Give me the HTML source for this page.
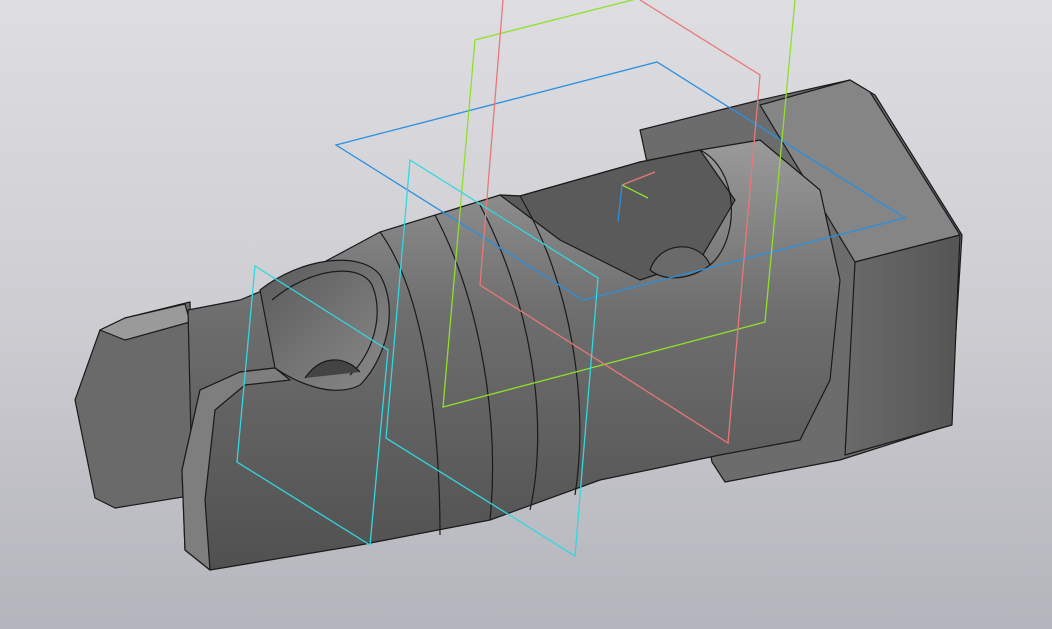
<!DOCTYPE html>
<html><head><meta charset="utf-8"><style>
html,body{margin:0;padding:0;width:1052px;height:629px;overflow:hidden}
body{background:linear-gradient(180deg,#dedee2 0%,#cdcdd2 50%,#b4b4bc 100%)}
svg{position:absolute;left:0;top:0}
</style></head><body>
<svg width="1052" height="629" viewBox="0 0 1052 629">
<defs>
<linearGradient id="b" x1="0" y1="0" x2="0" y2="1">
<stop offset="0" stop-color="#9a9a9a"/><stop offset="0.4" stop-color="#6e6e6e"/><stop offset="1" stop-color="#505050"/></linearGradient>
<linearGradient id="h" x1="0" y1="0" x2="1" y2="0">
<stop offset="0" stop-color="#6a6a6a"/><stop offset="1" stop-color="#555"/></linearGradient>
<linearGradient id="o" x1="0" y1="0" x2="1" y2="1">
<stop offset="0" stop-color="#5a5a5a"/><stop offset="1" stop-color="#8a8a8a"/></linearGradient>
</defs>
<g stroke="#1a1a1a" stroke-width="1.2" stroke-linejoin="round">
<path d="M640,130 L760,100 L850,80 L875,95 L962,235 L950,425 L840,460 L725,482 L712,462 Z" fill="#6c6c6c"/>
<path d="M760,105 L850,80 L870,92 L960,235 L855,262 Z" fill="#858585"/>
<path d="M855,262 L960,235 L952,425 L845,455 Z" fill="url(#h)"/>
<path d="M75,400 L100,330 L125,318 L190,302 L195,495 L115,508 L95,498 Z" fill="#6a6a6a"/>
<path d="M100,330 L125,318 L185,304 L190,322 L125,340 Z" fill="#9a9a9a"/>
<path d="M188,310 L240,300 L300,275 L380,232 L500,195 L520,196 L640,162 L700,150 L760,140 L820,190 L840,280 L830,380 L800,440 L720,455 L600,480 L490,520 L360,545 L210,570 L185,550 L182,470 L200,390 L240,372 L275,368 L200,400 L192,480 Z" fill="url(#b)"/>
<path d="M260,290 C300,258 360,250 380,275 C400,310 385,360 360,385 C335,398 300,385 275,368 Z" fill="url(#o)"/>
<path d="M272,300 C310,268 360,262 372,285 C385,315 372,355 350,375" fill="none"/>
<path d="M500,195 L520,196 L640,162 L700,150 L735,200 L700,260 L640,280 L560,240 Z" fill="#5a5a5a"/>
<path d="M650,270 C660,240 700,240 710,265 C690,280 665,282 650,270 Z" fill="#6a6a6a"/>
<path d="M700,150 C740,170 740,240 710,265" fill="none"/>
<path d="M182,470 L200,390 L240,372 L275,368 L290,380 L245,385 L215,410 L205,500 L210,570 L185,550 Z" fill="#7e7e7e"/>
<path d="M380,232 C430,300 440,450 440,535" fill="none"/>
<path d="M435,215 C480,300 500,420 490,520" fill="none"/>
<path d="M480,205 C530,300 550,420 530,510" fill="none"/>
<path d="M520,196 C570,280 590,400 575,495" fill="none"/>
<path d="M305,378 C320,355 345,355 360,372" fill="#444"/>
</g>
<g fill="none" stroke-width="1.3">
<path d="M336,145 L657,62 L905,218 L583,300 Z" stroke="#2a90e0"/>
<path d="M475,40 L640,-2 M795,0 L765,322 L443,407 L475,40" stroke="#8ee02a"/>
<path d="M503,0 L480,285 L728,443 L760,75 L640,0" stroke="#e87878"/>
<path d="M410,160 L598,278 L575,556 L386,438 Z" stroke="#30d8e0"/>
<path d="M255,266 L388,350 L370,545 L237,462 Z" stroke="#30d8e0"/>
<path d="M622,185 L655,172" stroke="#e87878"/><path d="M622,185 L648,198" stroke="#8ee02a"/><path d="M622,185 L618,222" stroke="#2a90e0"/>
</g>
</svg>
</body></html>
